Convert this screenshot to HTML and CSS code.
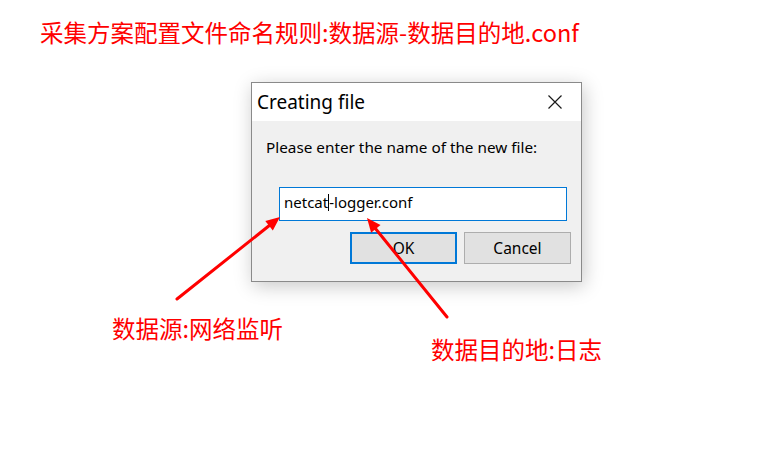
FILE: index.html
```html
<!DOCTYPE html>
<html lang="zh-CN">
<head>
  <meta charset="UTF-8" />
  <meta name="viewport" content="width=device-width, initial-scale=1.0"/>
  <title>采集方案配置文件命名规则</title>
  <link rel="stylesheet" href="styles.css">
</head>
<body>
  <div class="page">
    <h1 class="note-title">采集方案配置文件命名规则:数据源-数据目的地.conf</h1>

    <!-- 对话框 -->
    <div class="dialog">
      <div class="titlebar">
        <span class="title">Creating file</span>
        <svg class="close" width="14" height="14" viewBox="0 0 14 14">
          <path d="M0.5 0.5 L13.5 13.5 M13.5 0.5 L0.5 13.5" stroke="#1a1a1a" stroke-width="1.2" fill="none"/>
        </svg>
      </div>
      <div class="dialog-body">
        <p class="prompt">Please enter the name of the new file:</p>
        <div class="name-input">netcat<span class="caret"></span>-logger.conf</div>
        <div class="buttons">
          <button class="btn btn-default">OK</button>
          <button class="btn">Cancel</button>
        </div>
      </div>
    </div>

    <!-- 说明文字 -->
    <div class="labels">
      <span class="note">数据源:网络监听</span>
      <span class="note note-dest">数据目的地:日志</span>
    </div>

    <!-- 箭头 -->
    <svg class="arrows" width="781" height="451" viewBox="0 0 781 451">
      <line x1="177" y1="299" x2="270" y2="225" stroke="#ff0000" stroke-width="3" stroke-linecap="round"/>
      <polygon points="280,217 272.8,230.4 265.3,221" fill="#ff0000"/>
      <line x1="447" y1="317" x2="375" y2="228" stroke="#ff0000" stroke-width="3" stroke-linecap="round"/>
      <polygon points="367,218 380.5,225.1 371.1,232.7" fill="#ff0000"/>
    </svg>
  </div>
</body>
</html>
```

FILE: styles.css
```css
* { box-sizing: border-box; }
body {
  margin: 0;
  background: #fff;
  font-family: "Noto Sans CJK SC", "Noto Sans", sans-serif;
}

.page {
  position: relative;
  width: 781px;
  height: 451px;
  overflow: hidden;
}

.note-title {
  margin: 0;
  padding: 17px 0 0 40px;
  font-size: 23.5px;
  line-height: 30px;
  font-weight: normal;
  color: #ff0000;
}

.dialog {
  width: 331px;
  height: 200px;
  margin: 35px 0 0 251px;
  border: 1px solid #8a8a8a;
  background: #f0f0f0;
  box-shadow: 2px 4px 18px rgba(0, 0, 0, 0.22);
  font-family: "Noto Sans", sans-serif;
}

.titlebar {
  display: flex;
  align-items: center;
  justify-content: space-between;
  height: 38px;
  padding: 0 19px 0 5px;
  background: #fff;
}

.title {
  font-size: 19px;
  color: #000;
}

.dialog-body {
  padding: 16px 10px 0 14px;
}

.prompt {
  margin: 0;
  font-size: 15.3px;
  line-height: 20px;
  color: #000;
}

.name-input {
  width: 288px;
  height: 34px;
  margin: 30px 0 0 13px;
  padding: 0 4px;
  border: 1px solid #0078d7;
  background: #fff;
  font-size: 15px;
  line-height: 28px;
  color: #000;
}

.caret {
  display: inline-block;
  width: 0;
  height: 17px;
  border-left: 1px solid #000;
  vertical-align: -3px;
}

.buttons {
  display: flex;
  justify-content: flex-end;
  gap: 7px;
  margin-top: 11px;
}

.btn {
  width: 107px;
  height: 32px;
  border: 1px solid #adadad;
  background: #e1e1e1;
  font-family: "Noto Sans", sans-serif;
  font-size: 15.5px;
  color: #000;
  padding: 0;
}

.btn-default {
  border: 2px solid #0078d7;
}

.labels {
  display: flex;
  align-items: flex-start;
  margin-top: 31px;
  padding-left: 112px;
}

.note {
  font-size: 23.5px;
  line-height: 30px;
  color: #ff0000;
}

.note-dest {
  margin: 21px 0 0 148px;
}

.arrows {
  position: absolute;
  top: 0;
  left: 0;
  pointer-events: none;
}
```
